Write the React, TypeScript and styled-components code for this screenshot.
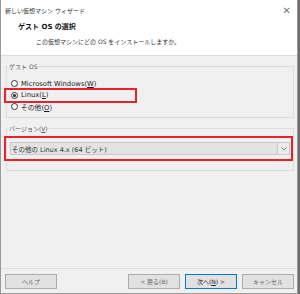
import styled, { createGlobalStyle } from "styled-components";

const GlobalStyle = createGlobalStyle`
  *, *::before, *::after {
    box-sizing: border-box;
  }
  html, body {
    margin: 0;
    padding: 0;
    background: #6d6d6d;
  }
  body {
    font-family: "DejaVu Sans", "Noto Sans CJK JP", sans-serif;
    font-size: 6px;
    color: #111;
  }
`;

const Window = styled.div`
  width: 298px;
  height: 294px;
  border: 1px solid #9a9a9a;
  border-top: none;
  background: #f0f0f0;
  display: flex;
  flex-direction: column;
`;

const TitleBar = styled.div`
  height: 20px;
  flex-shrink: 0;
  background: #fff;
  display: flex;
  align-items: center;
  justify-content: space-between;
  padding: 1px 6px 0 4px;
  color: #333;
`;

const CloseIcon = styled.span`
  font-size: 10px;
  color: #777;
`;

const Header = styled.div`
  height: 36px;
  flex-shrink: 0;
  background: #fff;
  border-bottom: 1px solid #dcdcdc;
  display: flex;
  flex-direction: column;
  padding: 3px 0 0 17px;
  gap: 5px;
`;

const HeaderTitle = styled.div`
  font-weight: 700;
  font-size: 7px;
  line-height: 9px;
`;

const HeaderSub = styled.div`
  padding-left: 18px;
  line-height: 9px;
  color: #333;
`;

const Body = styled.div`
  flex: 1;
  display: flex;
  flex-direction: column;
  padding: 6px 3px 0 5px;
  gap: 6px;
`;

const Group = styled.fieldset<{ $h: number; $pad: number }>`
  margin: 0;
  height: ${(p) => p.$h}px;
  border: 1px solid #dcdcdc;
  display: flex;
  flex-direction: column;
  padding: ${(p) => p.$pad}px 0 0 0;
  min-width: 0;
`;

const Legend = styled.legend`
  color: #555;
  line-height: 9px;
  padding: 0 1px;
  margin-left: 1px;
`;

const RadioRow = styled.label<{ $marked?: boolean }>`
  position: relative;
  display: flex;
  align-items: center;
  gap: 3px;
  height: 11.5px;
  padding-left: 4px;
  font-size: 6.8px;
  color: #1a1a1a;

  ${(p) =>
    p.$marked &&
    `
    &::after {
      content: "";
      position: absolute;
      left: -3px;
      top: -2px;
      width: 133px;
      height: 15px;
      border: 2px solid #e8222c;
    }
  `}
`;

const Radio = styled.span<{ $on?: boolean }>`
  width: 7px;
  height: 7px;
  border-radius: 50%;
  border: 1px solid #333;
  background: #fff;
  display: flex;
  align-items: center;
  justify-content: center;

  &::after {
    content: "";
    width: 3px;
    height: 3px;
    border-radius: 50%;
    background: ${(p) => (p.$on ? "#222" : "transparent")};
  }
`;

const Key = styled.span`
  text-decoration: underline;
`;

const SelectWrap = styled.div`
  margin-left: -3px;
  width: 289px;
  height: 25px;
  border: 2px solid #e8222c;
  display: flex;
  align-items: center;
  padding-left: 4px;
`;

const Select = styled.div`
  width: 280px;
  height: 13px;
  display: flex;
  border: 1px solid #c9c9c9;
  background: #e3e3e3;
`;

const SelectValue = styled.div`
  flex: 1;
  display: flex;
  align-items: center;
  padding-left: 1px;
  font-size: 6.5px;
  color: #333;
  border-right: 1px solid #c9c9c9;
`;

const SelectButton = styled.div`
  width: 11px;
  display: flex;
  align-items: center;
  justify-content: center;
  background: #ececec;
`;

const Footer = styled.div`
  height: 25px;
  flex-shrink: 0;
  border-top: 1px solid #dcdcdc;
  display: flex;
  align-items: center;
  padding: 0 3px 0 4px;
`;

const Button = styled.div<{ $primary?: boolean }>`
  width: 52px;
  height: 15px;
  border: 1px solid ${(p) => (p.$primary ? "#0078d7" : "#adadad")};
  background: #e1e1e1;
  display: flex;
  align-items: center;
  justify-content: center;
  color: ${(p) => (p.$primary ? "#222" : "#666")};
`;

const Spacer = styled.div`
  flex: 1;
`;

const ButtonGroup = styled.div`
  display: flex;
  gap: 5px;
`;

export default function App() {
  return (
    <>
      <GlobalStyle />
      <Window>
        <TitleBar>
          <span>新しい仮想マシン ウィザード</span>
          <CloseIcon>✕</CloseIcon>
        </TitleBar>
        <Header>
          <HeaderTitle>ゲスト OS の選択</HeaderTitle>
          <HeaderSub>この仮想マシンにどの OS をインストールしますか。</HeaderSub>
        </Header>
        <Body>
          <Group $h={56} $pad={7}>
            <Legend>ゲスト OS</Legend>
            <RadioRow>
              <Radio />
              <span>
                Microsoft Windows(<Key>W</Key>)
              </span>
            </RadioRow>
            <RadioRow $marked>
              <Radio $on />
              <span>
                Linux(<Key>L</Key>)
              </span>
            </RadioRow>
            <RadioRow>
              <Radio />
              <span>
                その他(<Key>O</Key>)
              </span>
            </RadioRow>
          </Group>
          <Group $h={47} $pad={3}>
            <Legend>
              バージョン(<Key>V</Key>)
            </Legend>
            <SelectWrap>
              <Select>
                <SelectValue>その他の Linux 4.x (64 ビット)</SelectValue>
                <SelectButton>
                  <svg width="6" height="4" viewBox="0 0 6 4">
                    <path d="M0.5 0.5 L3 3 L5.5 0.5" fill="none" stroke="#666" strokeWidth="0.8" />
                  </svg>
                </SelectButton>
              </Select>
            </SelectWrap>
          </Group>
          <Spacer />
        </Body>
        <Footer>
          <Button>ヘルプ</Button>
          <Spacer />
          <ButtonGroup>
            <Button>&lt; 戻る(B)</Button>
            <Button $primary>
              次へ(<Key>N</Key>) &gt;
            </Button>
            <Button>キャンセル</Button>
          </ButtonGroup>
        </Footer>
      </Window>
    </>
  );
}
